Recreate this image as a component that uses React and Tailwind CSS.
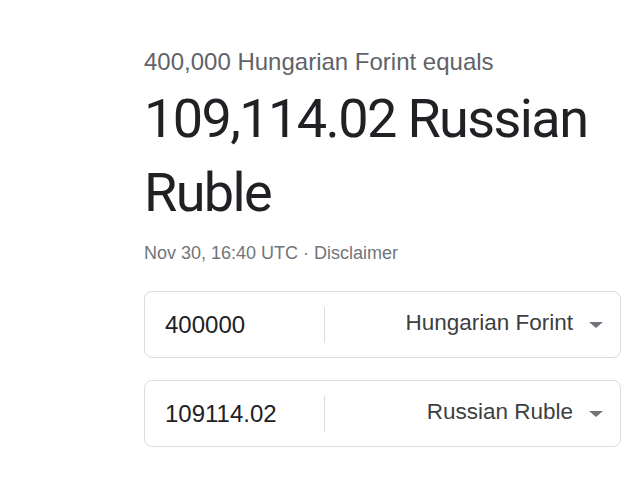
export default function App() {
  const rows = [
    { value: "400000", currency: "Hungarian Forint" },
    { value: "109114.02", currency: "Russian Ruble" },
  ];

  return (
    <div className="min-h-screen bg-white pl-[144px] pt-[44px] font-['Liberation_Sans',Arial,sans-serif]">
      <div className="w-[477px]">
        <p className="text-[24px] leading-[36px] text-[#5f6368]">400,000 Hungarian Forint equals</p>
        <h1 className="mt-[2px] font-['Roboto',sans-serif] text-[54px] leading-[74px] tracking-[-1.6px] text-[#202124] font-normal">
          109,114.02 Russian Ruble
        </h1>
        <p className="mt-[10px] text-[18px] leading-[27px] text-[#70757a]">Nov 30, 16:40 UTC · Disclaimer</p>

        <div className="mt-[24px] flex flex-col gap-[22px]">
          {rows.map((row) => (
            <div
              key={row.currency}
              className="flex h-[67px] items-center rounded-lg border border-[#dadce0] bg-white"
            >
              <div className="w-[179px] pl-[20px] text-[24px] text-[#202124]">{row.value}</div>
              <div className="h-[36px] w-px bg-[#dadce0]" />
              <div className="flex flex-1 items-center justify-end pr-[17px]">
                <span className="-mt-[3px] text-[22.5px] text-[#3c4043]">{row.currency}</span>
                <span className="ml-[16px] h-0 w-0 border-x-[7px] border-t-[6px] border-x-transparent border-t-[#70757a]" />
              </div>
            </div>
          ))}
        </div>
      </div>
    </div>
  );
}
